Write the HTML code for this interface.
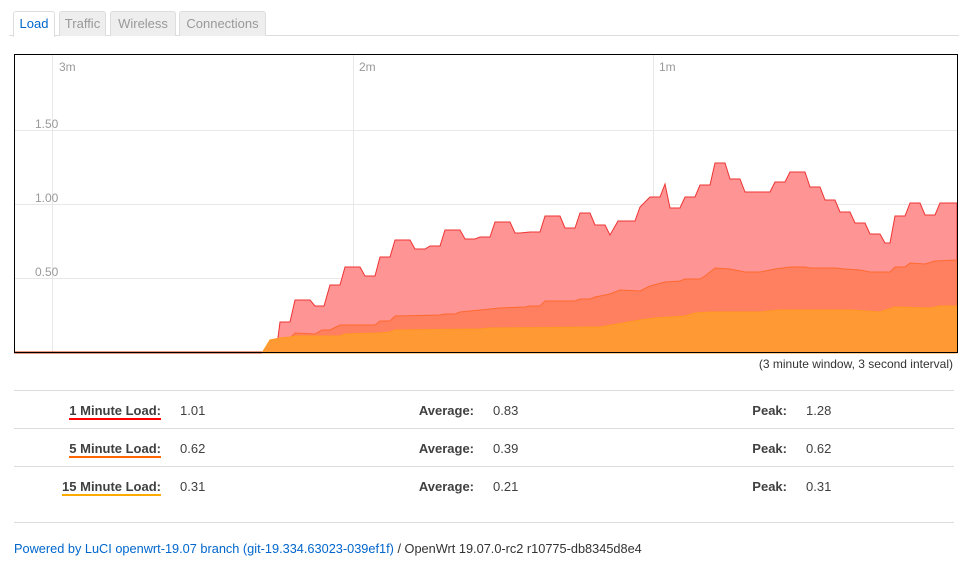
<!DOCTYPE html><html><head><style>
body{margin:0;background:#fff;font-family:"Liberation Sans",Arial,sans-serif;font-size:13px;color:#404040;width:975px;height:583px;position:relative;overflow:hidden}
.tab{position:absolute;top:11px;height:24px;line-height:24px;border:1px solid #ddd;border-bottom:none;border-radius:3px 3px 0 0;background:#eee;color:#999;text-align:center;font-size:13px}
.a{position:absolute;white-space:nowrap}
.lb{font-weight:bold;text-align:right}
.hr{position:absolute;left:14px;width:940px;height:1px;background:#ddd}
</style></head><body>
<div class="hr" style="top:35px;left:9px;width:950px"></div>
<div class="tab" style="left:13px;width:40px;background:#fff;color:#0066cc;height:25px">Load</div>
<div class="tab" style="left:59px;width:45px">Traffic</div>
<div class="tab" style="left:110px;width:64px">Wireless</div>
<div class="tab" style="left:179px;width:85px">Connections</div>
<svg style="position:absolute;left:0;top:0" width="975" height="583">
<g stroke="#e8e8e8" stroke-width="1"><line x1="52.5" y1="54" x2="52.5" y2="353"/><line x1="353.5" y1="54" x2="353.5" y2="353"/><line x1="653.5" y1="54" x2="653.5" y2="353"/>
<line x1="14" y1="130.5" x2="958" y2="130.5"/><line x1="14" y1="204.5" x2="958" y2="204.5"/><line x1="14" y1="278.5" x2="958" y2="278.5"/></g>
<polygon fill="#ff9494" stroke="#ee3333" stroke-width="1" points="14,353 276,353 280,322 290,322 295,300 310,300 315,306 324,306 330,285 340,285 345,267 360,267 365,276 375,276 380,257 390,257 395,240 410,240 415,249 425,249 430,246 440,246 445,230 460,230 465,239 475,239 480,237 490,237 495,222 510,222 515,233 520,233 530,232 540,232 545,216 560,216 565,228 575,228 580,213 590,213 595,225 605,225 610,235 618,221 635,221 640,207 650,197 660,197 665,184 670,208 680,208 685,197 695,197 700,185 710,185 715,163 725,163 730,179 740,179 745,192 770,192 775,182 785,182 790,172 805,172 810,187 820,187 825,200 835,200 840,212 850,212 855,223 865,223 870,234 880,234 885,243 890,243 895,216 905,216 910,203 920,203 925,215 935,215 940,203 957,203 957,353"/>
<polygon fill="#ff8060" stroke="#ff6a30" stroke-width="1" points="14,353 262,353 276,348 290,338 295,333 315,334 322,330 330,330 340,325 375,325 380,321 390,321 395,316 440,315 445,314 455,314 460,312 490,309 500,308 525,307 530,306 540,306 545,301 575,301 580,299 590,299 595,297 610,294 620,290 640,291 650,286 665,282 680,281 685,279 700,279 705,276 715,268 730,269 745,272 760,272 775,269 790,267 805,267 810,268 835,268 845,269 860,270 870,272 890,272 895,267 905,267 910,263 925,264 935,261 957,260 957,353"/>
<polygon fill="#ff9933" stroke="#ff9922" stroke-width="1" points="14,353 262,353 270,340 280,338 290,337 295,336 340,336 345,334 380,333 390,332 395,330 480,329 490,328 600,327 640,320 655,318 670,317 685,316 695,313 710,312 760,312 770,311 780,310 850,310 865,311 880,312 895,307 930,308 940,306 957,306 957,353"/>
<line x1="14" y1="352.5" x2="262" y2="352.5" stroke="#cc3300" stroke-width="2"/>
<rect x="14.5" y="54.5" width="943" height="298" fill="none" stroke="#000" stroke-width="1"/>
<g font-family="Liberation Sans,Arial,sans-serif" font-size="12" fill="#999"><text x="59" y="71">3m</text><text x="359" y="71">2m</text><text x="659" y="71">1m</text>
<text x="35" y="128">1.50</text><text x="35" y="202">1.00</text><text x="35" y="276">0.50</text></g>
</svg>
<div class="a" style="right:22px;top:357px;font-size:12px;color:#333">(3 minute window, 3 second interval)</div>
<div class="hr" style="top:390px"></div><div class="hr" style="top:428px"></div><div class="hr" style="top:466px"></div><div class="hr" style="top:522px"></div>
<div class="a lb" style="right:814px;top:403px;border-bottom:2px solid #ff0000">1 Minute Load:</div>
<div class="a lb" style="right:814px;top:441px;border-bottom:2px solid #ff6600">5 Minute Load:</div>
<div class="a lb" style="right:814px;top:479px;border-bottom:2px solid #ffaa00">15 Minute Load:</div>
<div class="a" style="left:180px;top:403px">1.01</div><div class="a" style="left:180px;top:441px">0.62</div><div class="a" style="left:180px;top:479px">0.31</div>
<div class="a lb" style="right:501px;top:403px">Average:</div><div class="a lb" style="right:501px;top:441px">Average:</div><div class="a lb" style="right:501px;top:479px">Average:</div>
<div class="a" style="left:493px;top:403px">0.83</div><div class="a" style="left:493px;top:441px">0.39</div><div class="a" style="left:493px;top:479px">0.21</div>
<div class="a lb" style="right:188px;top:403px">Peak:</div><div class="a lb" style="right:188px;top:441px">Peak:</div><div class="a lb" style="right:188px;top:479px">Peak:</div>
<div class="a" style="left:806px;top:403px">1.28</div><div class="a" style="left:806px;top:441px">0.62</div><div class="a" style="left:806px;top:479px">0.31</div>
<div class="a" style="left:14px;top:541px;font-size:12.75px;color:#333"><span style="color:#0066cc">Powered by LuCI openwrt-19.07 branch (git-19.334.63023-039ef1f)</span> / OpenWrt 19.07.0-rc2 r10775-db8345d8e4</div>
</body></html>
